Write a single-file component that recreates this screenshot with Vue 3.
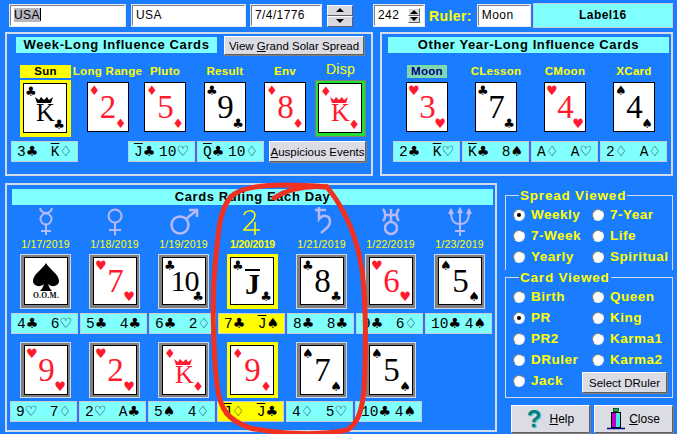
<script setup>
const suits = { c: '♣', s: '♠', h: '♥', d: '♦' }
const outline = { c: '♣', s: '♠', h: '♡', d: '♢' }

// "Kd" -> rank + suit, the court cards carry a bar in the pills
const parseCard = (code) => {
  const rank = code.slice(0, -1)
  const s = code.slice(-1)
  return { rank, s, glyph: suits[s], red: s === 'h' || s === 'd' }
}
const parsePart = (code) => {
  const rank = code.slice(0, -1)
  return { rank, glyph: outline[code.slice(-1)], bar: 'JQK'.includes(rank) }
}
const pill = (text) => text.split(' ').map(parsePart)

const weekSlots = [
  { label: 'Sun', code: 'Kc', frame: 'yellow', on: true, width: 51 },
  { label: 'Long Range', code: '2d', width: 73 },
  { label: 'Pluto', code: '5d', width: 42 },
  { label: 'Result', code: '9c', width: 60, gap: 9 },
  { label: 'Env', code: '8d', width: 60 },
  { label: 'Disp', code: 'Kd', frame: 'green', big: true, width: 51 }
]
const yearSlots = [
  { label: 'Moon', code: '3h', moon: true },
  { label: 'CLesson', code: '7c' },
  { label: 'CMoon', code: '4h' },
  { label: 'XCard', code: '4s' }
]
const yearPills = ['2c Kh', 'Kc 8s', 'Ad Ah', '2d Ad']

const planets = ['mercury', 'venus', 'mars', 'jupiter', 'saturn', 'uranus', 'neptune']
const dates = ['1/17/2019', '1/18/2019', '1/19/2019', '1/20/2019', '1/21/2019', '1/22/2019', '1/23/2019']
const rowOne = [
  { code: 'oom', pill: '4c 6h' },
  { code: '7h', pill: '5c 4c' },
  { code: '10c', pill: '6c 2d' },
  { code: 'Jc', pill: '7c Js', on: true },
  { code: '8c', pill: '8c 8c' },
  { code: '6h', pill: '9c 6d' },
  { code: '5s', pill: '10c 4s' }
]
const rowTwo = [
  { code: '9h', pill: '9h 7d' },
  { code: '2h', pill: '2h Ac' },
  { code: 'Kd', pill: '5s 4d' },
  { code: '9d', pill: 'Jd Jc', on: true },
  { code: '7s', pill: '4d 5h' },
  { code: '5s', pill: '10c 4s' }
]

const spreadOptions = ['Weekly', '7-Year', '7-Week', 'Life', 'Yearly', 'Spiritual']
const cardOptions = ['Birth', 'Queen', 'PR', 'King', 'PR2', 'Karma1', 'DRuler', 'Karma2', 'Jack']
</script>

<template>
  <div class="screen">
    <!-- top inputs -->
    <div class="top">
      <div class="field f1"><span class="selected">USA</span><i class="caret"></i></div>
      <div class="field f2">USA</div>
      <div class="field f3">7/4/1776</div>
      <div class="spin big"><b><i class="up"></i></b><b><i class="down"></i></b></div>
      <div class="field f4">242<div class="spin small"><b><i class="up"></i></b><b><i class="down"></i></b></div></div>
      <span class="ruler">Ruler:</span>
      <div class="field f5">Moon</div>
      <div class="label16">Label16</div>
    </div>

    <!-- influence cards -->
    <div class="middle">
      <section class="panel week">
        <div class="head-row">
          <div class="title week-title">Week-Long Influence Cards</div>
          <button class="btn spread-btn">View <u>G</u>rand Solar Spread</button>
        </div>
        <div class="slots">
          <div v-for="s in weekSlots" :key="s.label" class="slot" :style="{ width: s.width + 'px', marginLeft: (s.gap || 0) + 'px' }">
            <div class="slot-label" :class="{ on: s.on, big: s.big }">{{ s.label }}</div>
            <div class="frame" :class="s.frame || 'plain'">
              <div class="card" :class="{ red: parseCard(s.code).red }">
                <span class="pip tl">{{ parseCard(s.code).glyph }}</span>
                <svg v-if="parseCard(s.code).rank === 'K'" class="crown" viewBox="0 0 20 8"><path d="M1 1l4 3 2-3 3 3 3-3 2 3 4-3-2 6H3z" fill="currentColor" /></svg>
                <span class="rank" :class="{ king: parseCard(s.code).rank === 'K' }">{{ parseCard(s.code).rank }}</span>
                <span class="pip br">{{ parseCard(s.code).glyph }}</span>
              </div>
            </div>
          </div>
        </div>
        <div class="week-pills">
          <div class="pill"><span v-for="p in pill('3c Kd')" :key="p.rank"><em :class="{ bar: p.bar }">{{ p.rank }}</em>{{ p.glyph }}</span></div>
          <div class="pill p2"><span v-for="p in pill('Jc 10h')" :key="p.rank"><em :class="{ bar: p.bar }">{{ p.rank }}</em>{{ p.glyph }}</span></div>
          <div class="pill p3"><span v-for="p in pill('Qc 10d')" :key="p.rank"><em :class="{ bar: p.bar }">{{ p.rank }}</em>{{ p.glyph }}</span></div>
          <button class="btn events-btn"><u>A</u>uspicious Events</button>
        </div>
      </section>

      <section class="panel year">
        <div class="title year-title">Other Year-Long Influence Cards</div>
        <div class="year-slots">
          <div v-for="s in yearSlots" :key="s.label" class="slot year-slot">
            <div class="slot-label" :class="{ moon: s.moon }">{{ s.label }}</div>
            <div class="frame plain">
              <div class="card" :class="{ red: parseCard(s.code).red }">
                <span class="pip tl">{{ parseCard(s.code).glyph }}</span>
                <span class="rank">{{ parseCard(s.code).rank }}</span>
                <span class="pip br">{{ parseCard(s.code).glyph }}</span>
              </div>
            </div>
          </div>
        </div>
        <div class="year-pills">
          <div v-for="t in yearPills" :key="t" class="pill"><span v-for="p in pill(t)" :key="p.rank"><em :class="{ bar: p.bar }">{{ p.rank }}</em>{{ p.glyph }}</span></div>
        </div>
      </section>
    </div>

    <div class="bottom">
      <!-- daily cards -->
      <section class="panel days">
        <div class="title days-title">Cards Ruling Each Day</div>
        <div class="grid">
          <div v-for="(name, i) in planets" :key="name" class="planet" :class="{ today: i === 3 }">
            <svg width="36" height="30" viewBox="0 0 36 30" fill="none" stroke="currentColor" stroke-width="2">
              <g v-if="name === 'mercury'"><circle cx="18" cy="12" r="5.5" /><path d="M12 1c1 4 3 5 6 5s5-1 6-5M18 17v11M13 24h10" /></g>
              <g v-if="name === 'venus'"><circle cx="18" cy="9" r="6.5" /><path d="M18 15.500v13M12 23h12" /></g>
              <g v-if="name === 'mars'"><circle cx="14" cy="18" r="8.5" stroke-width="2.500" /><path d="M20 12 31 3M23 3h8v7" stroke-width="2.500" /></g>
              <g v-if="name === 'jupiter'"><path d="M9 8C10 3 20 2 20 8C20 14 12 18 9 23H25M20 15V28" stroke-width="1.500" /></g>
              <g v-if="name === 'saturn'"><path d="M11 3h11M15 0v12c4-5 11-4 11 3 0 5-6 8-9 11" stroke-width="2.500" /></g>
              <g v-if="name === 'uranus'"><circle cx="18" cy="21" r="6" stroke-width="2.500" /><path d="M18 15V2M10 2c3 3 3 9 0 12M26 2c-3 3-3 9 0 12M11 8h14" stroke-width="2.500" /></g>
              <g v-if="name === 'neptune'"><path d="M9 5c0 9 3 12 9 12s9-3 9-12M18 2v27M13 24h10M7 7l2-4 2 4M25 7l2-4 2 4M16 6l2-4 2 4" /></g>
            </svg>
            <span class="date">{{ dates[i] }}</span>
          </div>
        </div>
        <div v-for="(row, r) in [rowOne, rowTwo]" :key="r" class="grid day-row" :class="'row' + r">
          <div v-for="(d, i) in row" :key="i" class="day">
            <div class="frame" :class="d.on ? 'yellow' : 'gray'">
              <div v-if="d.code === 'oom'" class="card oom">
                <svg class="oom-pip" width="28" height="28" viewBox="0 0 28 28"><path d="M14 0C11 6 1 11 1 18c0 5 7 7 11 3-1 3-2 5-4 7h12c-2-2-3-4-4-7 4 4 11 2 11-3C27 11 17 6 14 0z" fill="#000" /></svg>
                <span class="oom-text">O.O.M.</span>
              </div>
              <div v-else class="card" :class="{ red: parseCard(d.code).red }">
                <span class="pip tl">{{ parseCard(d.code).glyph }}</span>
                <svg v-if="parseCard(d.code).rank === 'K'" class="crown" viewBox="0 0 20 8"><path d="M1 1l4 3 2-3 3 3 3-3 2 3 4-3-2 6H3z" fill="currentColor" /></svg>
                <span class="rank" :class="{ king: parseCard(d.code).rank === 'K', jack: parseCard(d.code).rank === 'J', ten: parseCard(d.code).rank === '10' }">{{ parseCard(d.code).rank }}</span>
                <span class="pip br">{{ parseCard(d.code).glyph }}</span>
              </div>
            </div>
            <div class="pill" :class="{ today: d.on }"><span v-for="p in pill(d.pill)" :key="p.rank + p.glyph"><em :class="{ bar: p.bar }">{{ p.rank }}</em>{{ p.glyph }}</span></div>
          </div>
        </div>
      </section>

      <!-- options -->
      <aside class="side">
        <fieldset class="group spread">
          <legend>Spread Viewed</legend>
          <div class="options">
            <label v-for="o in spreadOptions" :key="o" class="option"><i class="radio" :class="{ checked: o === 'Weekly' }"></i>{{ o }}</label>
          </div>
        </fieldset>
        <fieldset class="group viewed">
          <legend>Card Viewed</legend>
          <div class="options">
            <label v-for="o in cardOptions" :key="o" class="option"><i class="radio" :class="{ checked: o === 'PR' }"></i>{{ o }}</label>
            <button class="btn druler">Select DRuler</button>
          </div>
        </fieldset>
        <div class="actions">
          <button class="btn action">
            <span class="help-mark">?</span>
            <span><u>H</u>elp</span>
          </button>
          <button class="btn action close">
            <svg width="18" height="22" viewBox="0 0 18 22">
              <rect x="6.500" y="0.500" width="5" height="3" fill="#00c040" stroke="#000" stroke-width=".6" />
              <rect x="4.500" y="4.500" width="9" height="15" fill="#e8e8f0" stroke="#000" />
              <rect x="5" y="5" width="4" height="14" fill="#c000c0" />
              <rect x="9" y="5" width="4" height="14" fill="#40e8e8" />
              <path d="M0 20.500h18" stroke="#000080" stroke-width="1.500" />
            </svg>
            <span><u>C</u>lose</span>
          </button>
        </div>
      </aside>
    </div>

    <!-- red marker drawn over the screenshot -->
    <svg class="marker" width="677" height="434" viewBox="0 0 677 434" fill="none" stroke="#f03020" stroke-width="5" stroke-linecap="round">
      <path d="M327 187C280 183 240 184 230 198C218 212 218 240 215 265C212 300 213 350 217 385C220 410 228 420 250 428C280 434 320 436 347 430C358 424 362 410 364 390C366 350 366 320 364 290C362 255 352 218 327 187" />
      <path d="M274 198C288 189 305 185 327 187" />
    </svg>
  </div>
</template>

<style>
html, body { margin: 0; background: #1a7dff; }
</style>

<style scoped>
.screen {
  position: relative;
  width: 677px;
  height: 434px;
  overflow: hidden;
  background: #1a7dff;
  font-family: "Liberation Sans", Arial, sans-serif;
}

/* top row */
.top {
  display: flex;
  align-items: center;
  height: 25px;
  padding: 3px 0 0 10px;
}
.field {
  position: relative;
  box-sizing: border-box;
  height: 21px;
  padding: 2px 0 0 3px;
  background: #fff;
  border: 1px solid #fff;
  border-top-color: #808080;
  border-left-color: #808080;
  outline: 1px solid #e8e8f0;
  font-size: 12px;
  line-height: 15px;
  letter-spacing: .4px;
  color: #000;
}
.f1 { width: 115px; }
.f2 { width: 113px; margin-left: 7px; }
.f3 { width: 70px; margin-left: 6px; }
.f4 { width: 50px; margin-left: 21px; }
.f5 { width: 52px; margin-left: 6px; }
.selected { background: #b8b8c0; }
.caret { display: inline-block; width: 1px; height: 13px; background: #000; vertical-align: -2px; }
.spin { display: flex; flex-direction: column; }
.spin b {
  display: flex;
  flex: 1;
  align-items: center;
  justify-content: center;
  background: #d8d8e0;
  border: 1px solid;
  border-color: #fff #606060 #606060 #fff;
}
.spin.big { width: 26px; height: 22px; margin-left: 6px; }
.spin.small { position: absolute; top: 2px; right: 3px; width: 12px; height: 15px; }
.up { border: 4px solid transparent; border-top: 0; border-bottom: 4px solid #000; }
.down { border: 4px solid transparent; border-bottom: 0; border-top: 4px solid #000; }
.ruler { margin-left: 5px; font-size: 14px; font-weight: 700; letter-spacing: .4px; color: #ff0; }
.label16 {
  box-sizing: border-box;
  width: 140px;
  height: 25px;
  margin-left: 3px;
  background: #80ffff;
  border: 1px solid #c8c8d0;
  font-size: 12px;
  font-weight: 700;
  line-height: 23px;
  text-align: center;
  letter-spacing: .4px;
}

/* panels */
.middle { display: flex; gap: 7px; padding: 4px 0 0 5px; }
.panel { box-sizing: border-box; border: 2px solid #d4dae8; }
.week { width: 368px; height: 144px; padding: 3px 0 0 9px; }
.year { width: 293px; height: 144px; padding: 3px 0 0 6px; }
.title {
  height: 16px;
  background: #80ffff;
  color: #000;
  font-size: 13px;
  font-weight: 700;
  line-height: 16px;
  text-align: center;
  letter-spacing: .6px;
}
.head-row { display: flex; align-items: flex-start; gap: 7px; }
.week-title { width: 201px; }
.year-title { width: 281px; }
.btn {
  box-sizing: border-box;
  padding: 0;
  background: #dcdce4;
  border: 1px solid;
  border-color: #fff #606060 #606060 #fff;
  box-shadow: 1px 1px 0 #808080;
  font-family: "Liberation Sans", Arial, sans-serif;
  font-size: 11.500px;
  color: #000;
}
.spread-btn { width: 140px; height: 19px; margin-top: -1px; }

.slots { display: flex; margin: 10px 0 0 4px; }
.slot { display: flex; flex-direction: column; align-items: center; }
.slot-label {
  width: 100%;
  height: 13px;
  font-size: 11.500px;
  font-weight: 700;
  line-height: 13px;
  text-align: center;
  letter-spacing: .3px;
  white-space: nowrap;
  color: #ff0;
}
.slot-label.on { background: #ff0; color: #000; }
.slot-label.big { font-size: 14px; font-weight: 400; margin-top: -2px; height: 15px; }
.slot-label.moon { width: 40px; background: #80d8b0; color: #000080; }

.frame { box-sizing: border-box; }
.frame.plain { margin-top: 4px; }
.frame.yellow, .frame.green, .frame.gray {
  width: 51px;
  height: 57px;
  margin-top: 2px;
  padding: 3px 4px 4px 3px;
  border: 0;
}
.frame.yellow { background: #ff0; }
.frame.green { background: #20e030; outline: 1px solid #808080; outline-offset: -1px; }
.frame.gray { background: #808080; box-shadow: inset 0 0 0 1px #d0d8e8; padding: 3px 3px 3px 4px; }
.day .frame { margin-top: 0; margin-left: 2px; }
.card {
  position: relative;
  display: flex;
  align-items: center;
  justify-content: center;
  box-sizing: border-box;
  width: 42px;
  height: 50px;
  background: #fff;
  border: 1px solid #000;
  color: #000;
  font-family: "Liberation Serif", "Times New Roman", serif;
}
.frame.yellow .card, .frame.green .card, .frame.gray .card { width: 44px; height: 50px; }
.card.red { color: #ff1a2e; }
.pip {
  position: absolute;
  font-family: "DejaVu Sans", sans-serif;
  font-size: 13px;
  line-height: 13px;
}
.tl { top: 1px; left: 1px; }
.br { right: 1px; bottom: 1px; }
.rank { margin: 0 0 0 1px; font-size: 33px; font-weight: 400; line-height: 26px; }
.rank.king { margin-top: 10px; font-size: 26px; line-height: 22px; }
.rank.jack { position: relative; margin-top: 6px; font-size: 30px; line-height: 24px; font-weight: 700; }
.rank.jack::before {
  content: "";
  position: absolute;
  top: -3px;
  left: 0;
  right: 0;
  height: 2px;
  background: #000;
}
.rank.ten { font-size: 30px; letter-spacing: -1px; }
.crown { position: absolute; top: 12px; left: 10px; width: 20px; height: 8px; }
.oom { flex-direction: column; justify-content: flex-start; padding-top: 5px; }
.oom-pip { flex: none; }
.oom-text { font-size: 7.500px; font-weight: 700; line-height: 9px; letter-spacing: .3px; }

.pill {
  display: flex;
  align-items: center;
  justify-content: space-between;
  box-sizing: border-box;
  width: 67px;
  height: 21px;
  padding: 0 5px;
  background: #80ffff;
  border: 1px solid #c8ccd8;
  color: #000;
  font-family: "DejaVu Sans", sans-serif;
  font-size: 14px;
  line-height: 19px;
  white-space: nowrap;
}
.pill em {
  font-family: "Liberation Mono", monospace;
  font-size: 14.500px;
  font-style: normal;
}
.pill em.bar { text-decoration: overline; }
.pill.today { background: #ff0; }

.week-pills { display: flex; margin: 4px 0 0 -5px; }
.p2 { margin-left: 50px; }
.p3 { margin-left: 2px; }
.events-btn { width: 97px; height: 21px; margin-left: 5px; }

.year-slots { display: flex; margin: 12px 0 0 0; padding-left: 18px; gap: 27px; }
.year-slot { width: 42px; }
.year-slot .slot-label { flex: none; }
.year-slot .slot-label:not(.moon) { width: 60px; }
.year-pills { display: flex; gap: 2px; margin: 9px 0 0 5px; }

/* daily cards */
.bottom { display: flex; margin-top: 7px; padding-left: 5px; }
.days { width: 492px; height: 249px; padding: 4px 0 0 3px; }
.days-title { width: 481px; margin-left: 2px; }
.grid {
  display: grid;
  grid-template-columns: repeat(7, 69px);
  width: 483px;
}
.planet {
  display: flex;
  flex-direction: column;
  align-items: center;
  height: 49px;
  padding: 2px 0 0 2px;
  box-sizing: border-box;
  color: #b8b8f4;
}
.planet.today { color: #ff0; }
.planet.today .date { font-weight: 700; letter-spacing: -.2px; }
.date { margin-top: 1px; font-size: 10.500px; line-height: 13px; letter-spacing: .2px; color: #ff0; }
.day { display: flex; flex-direction: column; align-items: center; }
.day .pill { margin-top: 4px; }
.row0 .frame { height: 55px; }
.row0 .frame .card { height: 48px; }
.row1 { margin: 8px 0 0 -1px; }
.row1 .frame { margin-left: 4px; height: 56px; }
.row1 .day .pill { margin-top: 3px; }

/* options */
.side { width: 168px; margin-left: 8px; padding-top: 5px; }
.group { box-sizing: border-box; margin: 0; padding: 0 2px 0 7px; border: 1px solid #d4dae8; min-width: 0; }
.spread { height: 82px; border-bottom: 0; }
.viewed { height: 128px; }
legend {
  margin-left: 6px;
  padding: 0 1px;
  font-size: 13.500px;
  font-weight: 700;
  line-height: 15px;
  letter-spacing: .8px;
  color: #ff0;
}
.options { display: grid; grid-template-columns: 79px 1fr; grid-auto-rows: 21px; margin-top: 1px; }
.option {
  display: flex;
  align-items: center;
  gap: 6px;
  font-size: 13.500px;
  font-weight: 700;
  letter-spacing: .5px;
  white-space: nowrap;
  color: #ff0;
}
.radio {
  position: relative;
  flex: none;
  box-sizing: border-box;
  width: 12px;
  height: 12px;
  background: #fff;
  border: 1px solid #808080;
  border-right-color: #e8e8f0;
  border-bottom-color: #e8e8f0;
  border-radius: 50%;
}
.radio.checked::after {
  content: "";
  position: absolute;
  top: 3px;
  left: 3px;
  width: 4px;
  height: 4px;
  background: #000;
  border-radius: 50%;
}
.druler { width: 85px; height: 21px; margin: 2px 0 0 -10px; }
.actions { display: flex; gap: 4px; margin: 7px 0 0 6px; }
.action {
  display: flex;
  align-items: center;
  justify-content: center;
  gap: 8px;
  width: 79px;
  height: 28px;
  font-size: 12px;
}
.help-mark {
  font-size: 24px;
  font-weight: 700;
  line-height: 24px;
  color: #008080;
  text-shadow: 1px 1px 0 #60c0c0;
}
.close { gap: 4px; }

/* red marker */
.marker { position: absolute; top: 0; left: 0; pointer-events: none; }
</style>
